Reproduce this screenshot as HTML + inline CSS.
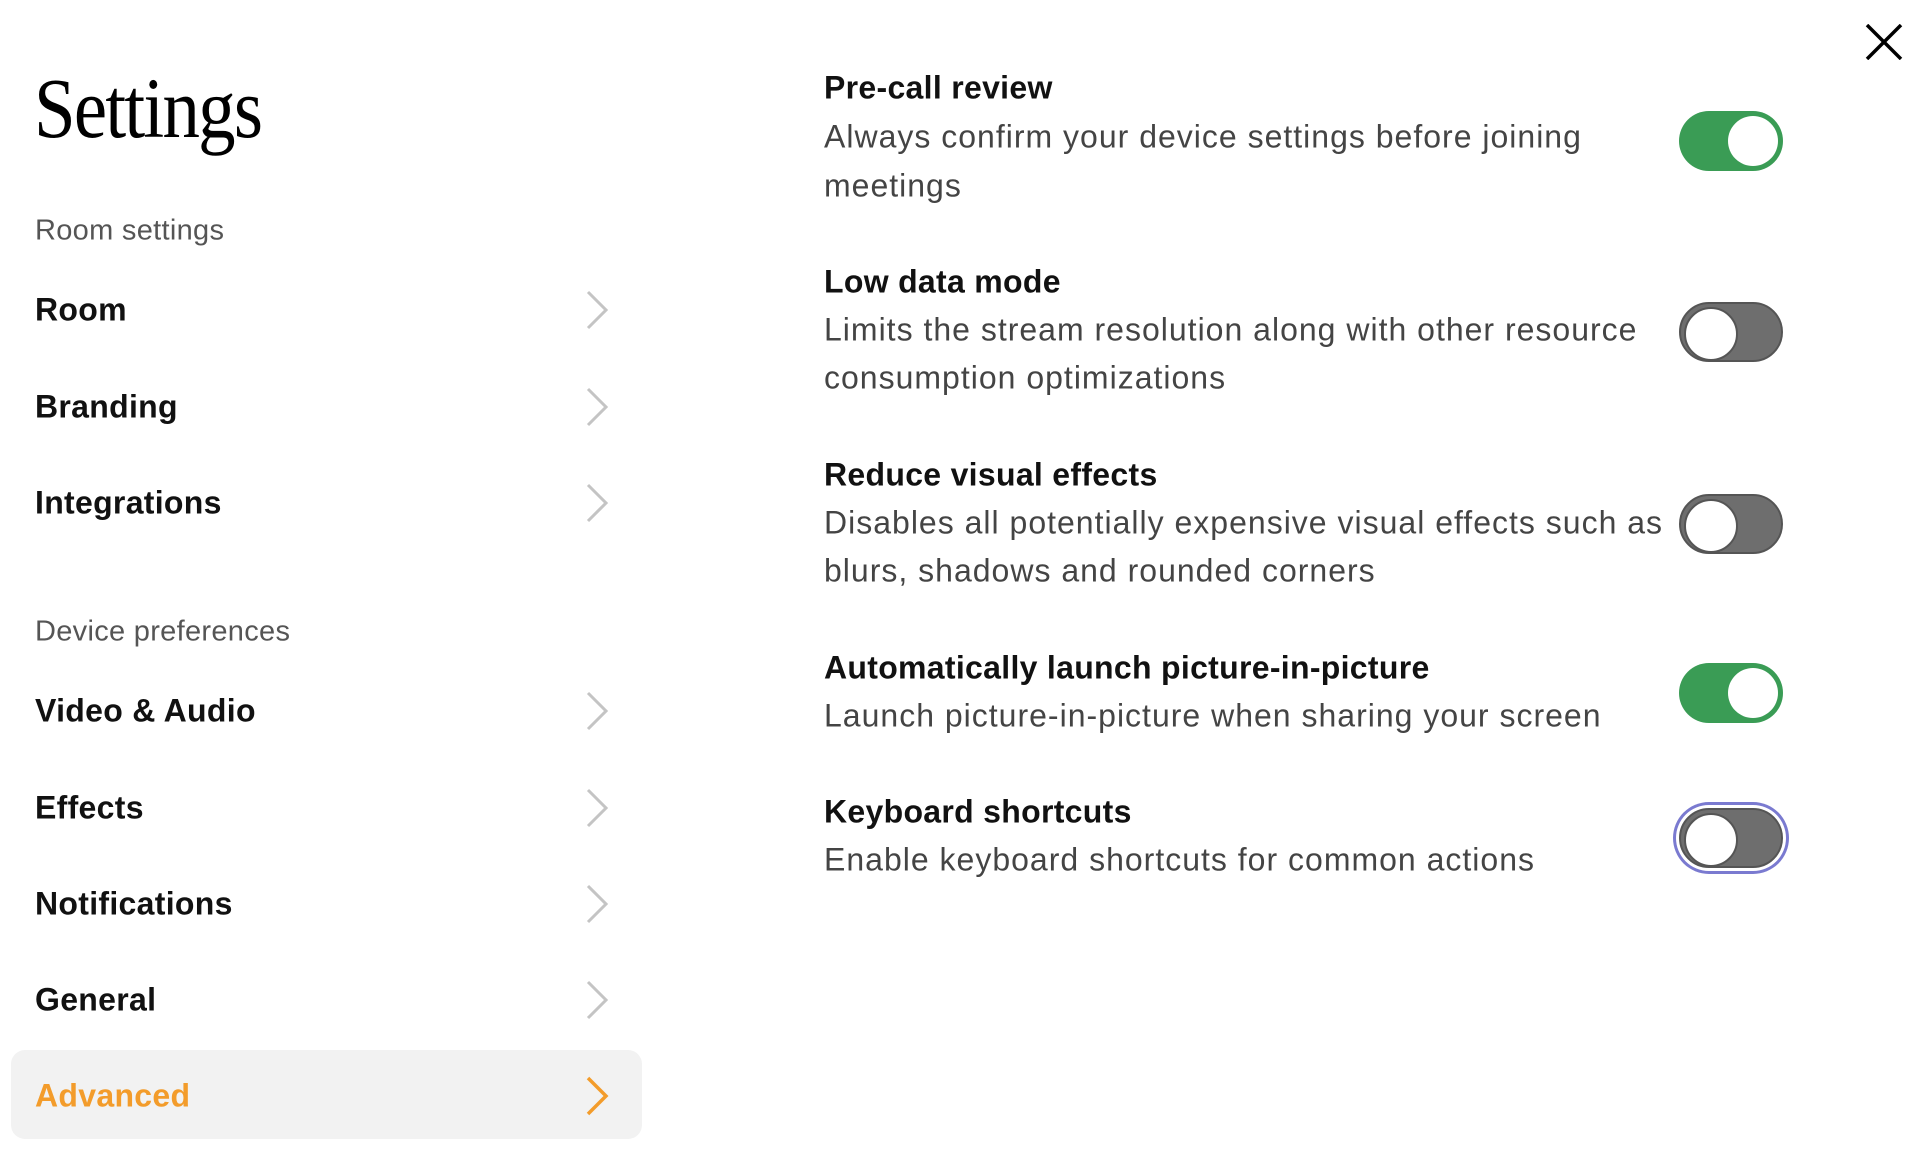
<!DOCTYPE html>
<html><head><meta charset="utf-8"><style>
*{margin:0;padding:0;box-sizing:border-box}
body{width:1928px;height:1166px;background:#fff;position:relative;overflow:hidden;font-family:"Liberation Sans",sans-serif}
.a{position:absolute;white-space:nowrap}
.title{left:34px;top:58px;font-family:"Liberation Serif",serif;font-size:86px;color:#000;transform:scaleX(.87);transform-origin:left;letter-spacing:-2px}
.lab{left:35px;font-size:29px;color:#555;transform:translateY(-50%);letter-spacing:.3px}
.it{left:35px;font-size:32px;font-weight:bold;color:#111;transform:translateY(-50%);letter-spacing:.3px}
.chev{position:absolute;left:584px;width:26px;height:40px;transform:translateY(-50%)}
.hl{position:absolute;left:11px;top:1054px;width:631px;height:89px;background:#f2f2f2;border-radius:14px}
.t{left:824px;font-size:32px;font-weight:bold;color:#111;transform:translateY(-50%);letter-spacing:.3px}
.d{left:824px;font-size:32px;color:#444;transform:translateY(-50%);letter-spacing:1px}
.tg{position:absolute;left:1679px;width:104px;height:60px;border-radius:30px;transform:translateY(-50%)}
.tg::after{content:"";position:absolute;top:5px;width:50px;height:50px;border-radius:50%;background:#fff}
.on{background:#3a9c55}.on::after{right:5px}
.off{background:#6e6e6e;border:2px solid #555}.off::after{left:3px;top:3px;border:2px solid #555}
.focus{box-shadow:0 0 0 3px #fff,0 0 0 6px #7a7ad0}
</style></head><body>
<div class="a title">Settings</div>
<div class="a lab" style="top:231px">Room settings</div>
<div class="a it" style="top:310px">Room</div>
<div class="a it" style="top:407px">Branding</div>
<div class="a it" style="top:503px">Integrations</div>
<div class="a lab" style="top:632px">Device preferences</div>
<div class="a it" style="top:711px">Video &amp; Audio</div>
<div class="a it" style="top:808px">Effects</div>
<div class="a it" style="top:904px">Notifications</div>
<div class="a it" style="top:1000px">General</div>
<div class="hl" style="top:1050px"></div>
<div class="a it" style="top:1096px;color:#f39c2b">Advanced</div>
<svg class="chev" style="top:310px" viewBox="0 0 26 40"><path d="M4 2 L22 20 L4 38" fill="none" stroke="#c4c4c4" stroke-width="3"/></svg>
<svg class="chev" style="top:407px" viewBox="0 0 26 40"><path d="M4 2 L22 20 L4 38" fill="none" stroke="#c4c4c4" stroke-width="3"/></svg>
<svg class="chev" style="top:503px" viewBox="0 0 26 40"><path d="M4 2 L22 20 L4 38" fill="none" stroke="#c4c4c4" stroke-width="3"/></svg>
<svg class="chev" style="top:711px" viewBox="0 0 26 40"><path d="M4 2 L22 20 L4 38" fill="none" stroke="#c4c4c4" stroke-width="3"/></svg>
<svg class="chev" style="top:808px" viewBox="0 0 26 40"><path d="M4 2 L22 20 L4 38" fill="none" stroke="#c4c4c4" stroke-width="3"/></svg>
<svg class="chev" style="top:904px" viewBox="0 0 26 40"><path d="M4 2 L22 20 L4 38" fill="none" stroke="#c4c4c4" stroke-width="3"/></svg>
<svg class="chev" style="top:1000px" viewBox="0 0 26 40"><path d="M4 2 L22 20 L4 38" fill="none" stroke="#c4c4c4" stroke-width="3"/></svg>
<svg class="chev" style="top:1096px" viewBox="0 0 26 40"><path d="M4 2 L22 20 L4 38" fill="none" stroke="#f39c2b" stroke-width="3.5"/></svg>

<svg style="position:absolute;left:1865px;top:24px" width="38" height="36" viewBox="0 0 38 36"><path d="M2 1 L36 35 M36 1 L2 35" stroke="#000" stroke-width="3.5"/></svg>

<div class="a t" style="top:88px">Pre-call review</div>
<div class="a d" style="top:137px">Always confirm your device settings before joining</div>
<div class="a d" style="top:186px">meetings</div>
<div class="tg on" style="top:141px"></div>

<div class="a t" style="top:282px">Low data mode</div>
<div class="a d" style="top:330px">Limits the stream resolution along with other resource</div>
<div class="a d" style="top:378px">consumption optimizations</div>
<div class="tg off" style="top:332px"></div>

<div class="a t" style="top:475px">Reduce visual effects</div>
<div class="a d" style="top:523px">Disables all potentially expensive visual effects such as</div>
<div class="a d" style="top:571px">blurs, shadows and rounded corners</div>
<div class="tg off" style="top:524px"></div>

<div class="a t" style="top:668px">Automatically launch picture-in-picture</div>
<div class="a d" style="top:716px">Launch picture-in-picture when sharing your screen</div>
<div class="tg on" style="top:693px"></div>

<div class="a t" style="top:812px">Keyboard shortcuts</div>
<div class="a d" style="top:860px">Enable keyboard shortcuts for common actions</div>
<div class="tg off focus" style="top:838px"></div>
</body></html>
